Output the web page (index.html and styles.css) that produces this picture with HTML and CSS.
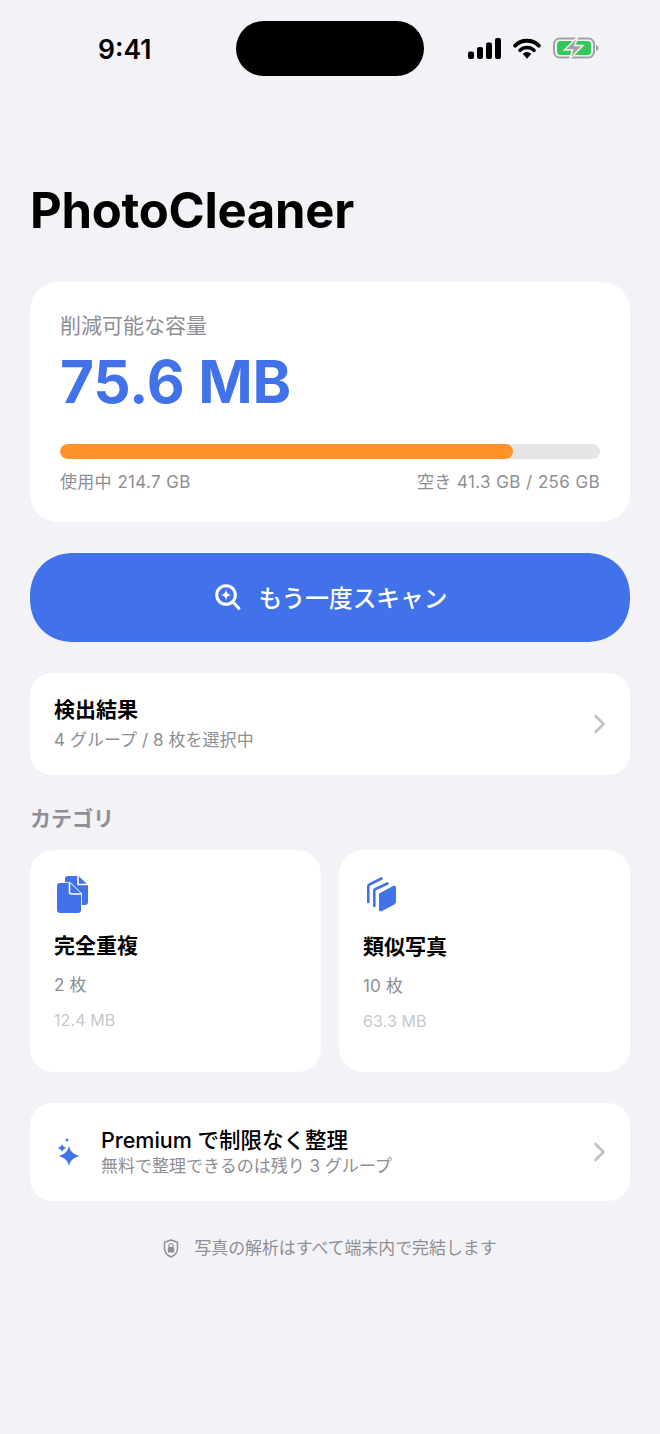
FILE: index.html
```html
<!DOCTYPE html>
<html lang="ja">
<head>
    <meta charset="UTF-8">
    <meta name="viewport" content="width=device-width, initial-scale=1.0">
    <title>PhotoCleaner</title>
    <link rel="stylesheet" href="styles.css">
</head>
<body>
    <div class="status-bar">
        <span class="clock">9:41</span>
        <div class="island"></div>
        <div class="status-icons">
            <svg width="33" height="21" viewBox="0 0 33 21"><rect x="0" y="13.500" width="6" height="7.500" rx="2"/><rect x="9" y="9" width="6" height="12" rx="2"/><rect x="18" y="4.500" width="6" height="16.500" rx="2"/><rect x="27" y="0" width="6" height="21" rx="2"/></svg>
            <svg width="28" height="21" viewBox="0 0 28 21"><path d="M2.200 7.600a17 17 0 0 1 23.600 0" fill="none" stroke="#000" stroke-width="4" stroke-linecap="round"/><path d="M7 12.300a10 10 0 0 1 14 0" fill="none" stroke="#000" stroke-width="3.600" stroke-linecap="round"/><path d="M9.700 15.800a6.200 6.200 0 0 1 8.600 0L14 20.800z"/></svg>
            <svg width="46" height="22" viewBox="0 0 46 22">
                <rect x="1" y="1.500" width="40" height="19" rx="5.500" fill="none" stroke="#a3a3a3" stroke-width="2"/>
                <rect x="4" y="4" width="34" height="14" rx="3.500" fill="#34c759"/>
                <path d="M43 8v6c1.600-.5 2.600-1.600 2.600-3s-1-2.500-2.600-3z" fill="#a3a3a3"/>
                <path d="M24.500 0 11.500 13h8L16.500 22l13.500-13.500h-8z" fill="#a3a3a3" stroke="#f2f2f7" stroke-width="1.500"/>
            </svg>
        </div>
    </div>

    <main class="content">
        <h1 class="app-title">PhotoCleaner</h1>

        <section class="card storage-card">
            <p class="storage-label">削減可能な容量</p>
            <p class="storage-value">75.6 MB</p>
            <div class="bar"><div class="bar-fill" style="width: 83.9%"></div></div>
            <div class="bar-legend">
                <span>使用中 214.7 GB</span>
                <span>空き 41.3 GB / 256 GB</span>
            </div>
        </section>

        <button class="scan-button">
            <svg width="28" height="28" viewBox="0 0 28 28" fill="none" stroke="#fff" stroke-width="3" stroke-linecap="round"><circle cx="12" cy="12" r="9.300"/><path d="M19 19l6 6.500"/><path d="M12 6.300c.5 3.800 1.900 5.200 5.700 5.700-3.800.5-5.200 1.900-5.700 5.700-.5-3.800-1.900-5.200-5.700-5.700 3.800-.5 5.200-1.900 5.700-5.700z" fill="#fff" stroke="none"/></svg>
            <span>もう一度スキャン</span>
        </button>

        <section class="card row-card results-card">
            <div class="row-text">
                <p class="row-title">検出結果</p>
                <p class="row-sub">4 グループ / 8 枚を選択中</p>
            </div>
            <svg class="chevron" width="14" height="20" viewBox="0 0 14 20" fill="none" stroke="#c0c0c5" stroke-width="2.600" stroke-linecap="round" stroke-linejoin="round"><path d="M2.500 2l8 8-8 8"/></svg>
        </section>

        <h2 class="section-title">カテゴリ</h2>

        <div class="category-grid">
            <section class="card category-card">
                <svg class="category-icon" width="34" height="40" viewBox="0 0 34 40">
                    <path d="M11 1h10.500L31 10v17a3 3 0 0 1-3 3H11a3 3 0 0 1-3-3V4a3 3 0 0 1 3-3z" fill="#4272ea"/>
                    <path d="M21 1v8.500h10" fill="none" stroke="#fff" stroke-width="1.600"/>
                    <path d="M3 8h10l11 10.500V35a3 3 0 0 1-3 3H3a3 3 0 0 1-3-3V11a3 3 0 0 1 3-3z" fill="#4272ea" stroke="#fff" stroke-width="1.600" paint-order="stroke"/>
                    <path d="M12.500 8v9a2 2 0 0 0 2 2H24" fill="none" stroke="#fff" stroke-width="1.600"/>
                </svg>
                <p class="category-name">完全重複</p>
                <p class="category-count">2 枚</p>
                <p class="category-size">12.4 MB</p>
            </section>
            <section class="card category-card similar">
                <svg class="category-icon" width="34" height="40" viewBox="0 0 34 40">
                    <path d="M15.500 3.500 3.500 9.500a2 2 0 0 0-1.200 1.900V27" fill="none" stroke="#4272ea" stroke-width="2.600" stroke-linecap="round"/>
                    <path d="M21.500 8.500 9.500 14a2 2 0 0 0-1.200 1.900V31" fill="none" stroke="#4272ea" stroke-width="2.600" stroke-linecap="round"/>
                    <path d="M15 17.500 27 11c1.500-.8 3-.2 3 1.500v14c0 1.300-.6 2.300-1.700 2.900L16 36c-1.500.8-3 .2-3-1.500V20c0-1.100.1-1.900 2-2.500z" fill="#4272ea"/>
                </svg>
                <p class="category-name">類似写真</p>
                <p class="category-count">10 枚</p>
                <p class="category-size">63.3 MB</p>
            </section>
        </div>

        <section class="card row-card premium-card">
            <svg class="sparkle" width="26" height="32" viewBox="0 0 26 32" fill="#4272ea">
                <path d="M14 9.500c1 5.500 3.500 8.500 10.500 10.500-7 2-9.500 5-10.500 10.500-1-5.500-3.500-8.500-10.500-10.500 7-2 9.500-5 10.500-10.500z"/>
                <path d="M7 7.500c.4 2.500 1.400 3.600 4.500 4.500-3.100.9-4.100 2-4.500 4.500-.4-2.500-1.400-3.600-4.500-4.500 3.100-.9 4.100-2 4.500-4.500z"/>
                <path d="M12 1.500c.3 1.600.9 2.200 2.500 2.500-1.600.3-2.200.9-2.500 2.500-.3-1.600-.9-2.200-2.500-2.500 1.600-.3 2.200-.9 2.500-2.500z"/>
            </svg>
            <div class="row-text">
                <p class="premium-title">Premium で制限なく整理</p>
                <p class="premium-sub">無料で整理できるのは残り 3 グループ</p>
            </div>
            <svg class="chevron" width="14" height="20" viewBox="0 0 14 20" fill="none" stroke="#c0c0c5" stroke-width="2.600" stroke-linecap="round" stroke-linejoin="round"><path d="M2.500 2l8 8-8 8"/></svg>
        </section>

        <p class="privacy-note">
            <svg width="16" height="19" viewBox="0 0 16 19"><path d="M8 1l6.500 2.300v6c0 4-2.500 7-6.500 8.700-4-1.700-6.500-4.700-6.500-8.700v-6z" fill="none" stroke="#8e8e93" stroke-width="1.500" stroke-linejoin="round"/><rect x="4.800" y="8" width="6.400" height="5.500" rx="1" fill="#8e8e93"/><path d="M6 8V6.500a2 2 0 0 1 4 0V8" fill="none" stroke="#8e8e93" stroke-width="1.200"/></svg>
            <span>写真の解析はすべて端末内で完結します</span>
        </p>
    </main>
</body>
</html>
```

FILE: styles.css
```css
* {
    box-sizing: border-box;
}

body {
    margin: 0;
    width: 660px;
    height: 1434px;
    overflow: hidden;
    background-color: #f2f2f7;
    color: #000;
    font-family: 'Inter', 'Noto Sans CJK JP', sans-serif;
}

p, h1, h2 {
    margin: 0;
}

.status-bar {
    display: flex;
    align-items: center;
    height: 55px;
    margin-top: 21px;
    padding: 0 61px 0 98px;
}

.clock {
    width: 138px;
    font-size: 26.5px;
    font-weight: 600;
}

.island {
    width: 188px;
    height: 55px;
    border-radius: 28px;
    background-color: #000;
}

.status-icons {
    display: flex;
    align-items: center;
    gap: 12px;
    margin-left: auto;
    margin-top: -1px;
}

.content {
    padding: 0 30px;
}

.app-title {
    margin-top: 105px;
    font-size: 49px;
    line-height: 60px;
    font-weight: 700;
    letter-spacing: -0.27px;
}

.card {
    background-color: #fff;
}

.storage-card {
    height: 240px;
    margin-top: 41px;
    padding: 30px 30px 0;
    border-radius: 28px;
}

.storage-label {
    font-size: 21px;
    line-height: 28px;
    color: #8e8e93;
}

.storage-value {
    margin-top: 8px;
    font-size: 58.5px;
    line-height: 68px;
    font-weight: 700;
    letter-spacing: -0.2px;
    color: #4272ea;
}

.bar {
    height: 15px;
    margin-top: 28px;
    border-radius: 8px;
    background-color: #e5e5e7;
    overflow: hidden;
}

.bar-fill {
    height: 100%;
    border-radius: 8px;
    background-color: #ff922b;
}

.bar-legend {
    display: flex;
    justify-content: space-between;
    margin-top: 11px;
    font-size: 17px;
    line-height: 24px;
    letter-spacing: 0.3px;
    word-spacing: 0.4px;
    color: #8e8e93;
}

.scan-button {
    display: flex;
    align-items: center;
    justify-content: center;
    gap: 17px;
    width: 100%;
    height: 89px;
    margin-top: 31px;
    padding: 0 0 2px 1px;
    border: none;
    border-radius: 44px;
    corner-shape: superellipse(1.12);
    background-color: #4272ea;
    color: #fff;
    font-family: inherit;
    font-size: 23.7px;
    font-weight: 500;
}

.row-card {
    display: flex;
    align-items: center;
    border-radius: 22px;
}

.results-card {
    height: 102px;
    margin-top: 31px;
    padding: 0 23px 0 24px;
}

.row-text {
    flex: 1;
}

.row-title {
    font-size: 21px;
    line-height: 28px;
    font-weight: 600;
}

.row-sub {
    margin-top: 4px;
    font-size: 17px;
    line-height: 24px;
    letter-spacing: 0.06px;
    color: #8e8e93;
}

.section-title {
    margin-top: 30px;
    font-size: 21px;
    line-height: 28px;
    font-weight: 600;
    color: #8e8e93;
}

.category-grid {
    display: grid;
    grid-template-columns: 1fr 1fr;
    gap: 18px;
    margin-top: 17px;
}

.category-card {
    height: 222px;
    padding: 25px 24px 0;
    border-radius: 24px;
}

.category-icon {
    display: block;
    margin-left: 3px;
}

.category-name {
    margin-top: 17px;
    font-size: 21px;
    line-height: 28px;
    font-weight: 600;
}

.category-count {
    margin-top: 13px;
    font-size: 17px;
    line-height: 24px;
    letter-spacing: 0.2px;
    color: #8e8e93;
}

.category-size {
    margin-top: 12px;
    font-size: 16px;
    line-height: 22px;
    letter-spacing: 0.1px;
    color: #c7c7cc;
}

.similar .category-name {
    margin-top: 18px;
}

.premium-card {
    gap: 20px;
    height: 98px;
    margin-top: 31px;
    padding: 0 23px 0 25px;
}

.premium-title {
    font-size: 21.5px;
    line-height: 26px;
    font-weight: 500;
}

.premium-sub {
    margin-top: 2px;
    font-size: 17px;
    line-height: 22px;
    color: #8e8e93;
}

.privacy-note {
    display: flex;
    align-items: center;
    justify-content: center;
    gap: 15px;
    margin-top: 35px;
    font-size: 16.9px;
    line-height: 24px;
    color: #8e8e93;
}
```
